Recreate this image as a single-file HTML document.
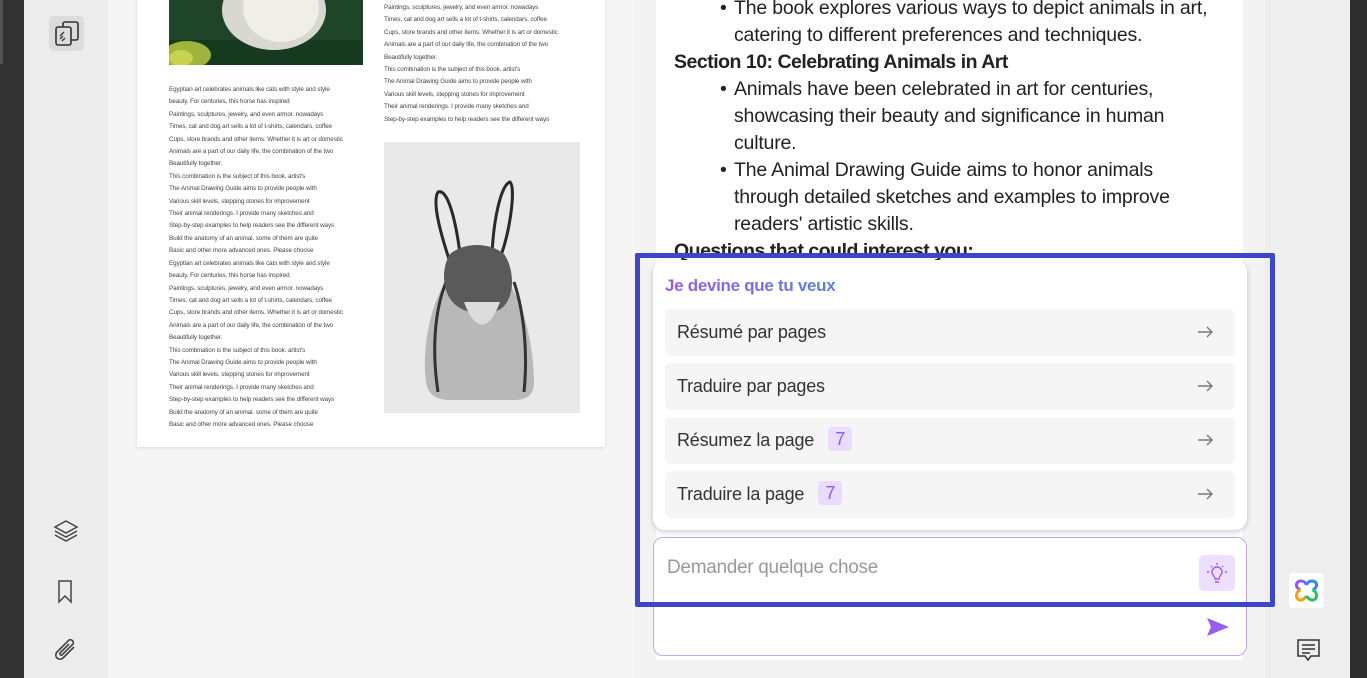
<!DOCTYPE html>
<html><head><meta charset="utf-8"><style>
*{margin:0;padding:0;box-sizing:border-box}
body{width:1367px;height:678px;overflow:hidden;position:relative;background:#f5f5f5;font-family:"Liberation Sans",sans-serif}
.abs{position:absolute}
.pt{font-size:6.3px;color:#444;line-height:12.4px;white-space:nowrap;letter-spacing:-0.1px}
.ans{font-size:19.5px;color:#222;line-height:27px;letter-spacing:-0.2px;white-space:nowrap}
.item{position:absolute;left:12px;width:570px;height:47px;background:#f5f5f5;border-radius:6px;font-size:18px;color:#333;line-height:47px;padding-left:12px;letter-spacing:-0.2px}
.item svg{position:absolute;right:22px;top:17px}
.badge{display:inline-block;background:#e9dcff;color:#8b5cf0;border-radius:4px;width:24px;height:24px;line-height:24px;text-align:center;margin-left:14px;font-size:18px;vertical-align:1px}
</style></head><body>
<div class="abs" style="left:0;top:0;width:24px;height:678px;background:#333"></div>
<div class="abs" style="left:0;top:0;width:3px;height:64px;background:#555"></div>
<div class="abs" style="left:24px;top:0;width:84px;height:678px;background:#ececec"></div>
<div class="abs" style="left:49px;top:16px;width:35px;height:35px;background:#dcdcdc;border-radius:5px"></div>
<svg class="abs" style="left:49px;top:16px" width="35" height="35" viewBox="0 0 35 35" fill="none" stroke="#333" stroke-width="1.6"><rect x="14" y="6" width="15" height="18" rx="2"/><rect x="7" y="11" width="15" height="18" rx="2" fill="#dcdcdc"/><path d="M11 23l3-3M11 20l4-4M13 25l3-3" stroke-width="1.3"/></svg>
<svg class="abs" style="left:52px;top:518px" width="28" height="26" viewBox="0 0 28 26" fill="none" stroke="#444" stroke-width="1.5"><path d="M14 3l11 6-11 6-11-6z"/><path d="M3 13l11 6 11-6"/><path d="M3 17l11 6 11-6"/></svg>
<svg class="abs" style="left:56px;top:579px" width="20" height="26" viewBox="0 0 20 26" fill="none" stroke="#444" stroke-width="1.5"><path d="M3 2h12v21l-6-6-6 6z"/></svg>
<svg class="abs" style="left:52px;top:637px" width="28" height="30" viewBox="0 0 28 30" fill="none" stroke="#444" stroke-width="1.6"><path d="M22 10l-11 11a4 4 0 0 1-6-6l12-12a3 3 0 0 1 4 4l-11 11a1.5 1.5 0 0 1-2-2l9-9"/></svg>

<div class="abs" style="left:137px;top:0;width:468px;height:447px;background:#fff;box-shadow:0 1px 3px rgba(0,0,0,.12)"></div>
<svg class="abs" style="left:169px;top:0" width="194" height="65" viewBox="0 0 194 65"><rect width="194" height="65" fill="#1f4529"/><rect y="40" width="194" height="25" fill="#163a20"/><ellipse cx="105" cy="10" rx="52" ry="40" fill="#d9d8d0"/><ellipse cx="112" cy="8" rx="38" ry="34" fill="#efeee9"/><ellipse cx="18" cy="55" rx="24" ry="14" fill="#9fb43c"/><ellipse cx="12" cy="58" rx="12" ry="8" fill="#c8d24e"/></svg>
<div class="abs pt" style="left:169px;top:84px">Egyptian art celebrates animals like cats with style and style<br>beauty. For centuries, this horse has inspired<br>Paintings, sculptures, jewelry, and even armor. nowadays<br>Times, cat and dog art sells a lot of t-shirts, calendars, coffee<br>Cups, store brands and other items. Whether it is art or domestic<br>Animals are a part of our daily life, the combination of the two<br>Beautifully together.<br>This combination is the subject of this book. artist's<br>The Animal Drawing Guide aims to provide people with<br>Various skill levels, stepping stones for improvement<br>Their animal renderings. I provide many sketches and<br>Step-by-step examples to help readers see the different ways<br>Build the anatomy of an animal. some of them are quite<br>Basic and other more advanced ones. Please choose<br>Egyptian art celebrates animals like cats with style and style<br>beauty. For centuries, this horse has inspired<br>Paintings, sculptures, jewelry, and even armor. nowadays<br>Times, cat and dog art sells a lot of t-shirts, calendars, coffee<br>Cups, store brands and other items. Whether it is art or domestic<br>Animals are a part of our daily life, the combination of the two<br>Beautifully together.<br>This combination is the subject of this book. artist's<br>The Animal Drawing Guide aims to provide people with<br>Various skill levels, stepping stones for improvement<br>Their animal renderings. I provide many sketches and<br>Step-by-step examples to help readers see the different ways<br>Build the anatomy of an animal. some of them are quite<br>Basic and other more advanced ones. Please choose</div>
<div class="abs pt" style="left:384px;top:2px">Paintings, sculptures, jewelry, and even armor. nowadays<br>Times, cat and dog art sells a lot of t-shirts, calendars, coffee<br>Cups, store brands and other items. Whether it is art or domestic<br>Animals are a part of our daily life, the combination of the two<br>Beautifully together.<br>This combination is the subject of this book. artist's<br>The Animal Drawing Guide aims to provide people with<br>Various skill levels, stepping stones for improvement<br>Their animal renderings. I provide many sketches and<br>Step-by-step examples to help readers see the different ways</div>
<svg class="abs" style="left:384px;top:142px" width="196" height="271" viewBox="0 0 196 271"><rect width="196" height="271" fill="#e8e9e8"/>
<g fill="none" stroke="#2a2a2a" stroke-width="3"><path d="M66 120c-10-30-18-60-12-70 10-4 18 30 22 62"/><path d="M108 112c2-40 10-70 18-72 6 6 0 50-10 76"/></g>
<path d="M62 140c-18 25-24 75-20 100 2 14 12 18 24 18h64c14 0 20-6 20-18 0-30-8-75-26-100z" fill="#b8b8b8"/>
<path d="M62 140c-12 30-14 70-8 110M130 140c10 30 14 70 10 110" stroke="#333" stroke-width="3" fill="none"/>
<path d="M66 112c-10 16-8 44 10 54 14 8 30 8 42 0 14-12 12-40 2-54-14-12-40-12-54 0z" fill="#5a5a5a"/>
<path d="M80 160c10 28 24 32 36 0z" fill="#dcdcdc"/></svg>

<div class="abs" style="left:635px;top:0;width:630px;height:678px;background:#f3f3f3"></div>
<div class="abs" style="left:656px;top:0;width:587px;height:660px;background:#fff"></div>
<div class="abs" style="left:1265px;top:0;width:85px;height:678px;background:#eeeeee"></div>
<div class="abs" style="left:1350px;top:0;width:17px;height:678px;background:#2e2e2e"></div>

<div class="abs ans" style="left:674px;top:-5px">
<div style="padding-left:60px;position:relative"><span style="position:absolute;left:46px">•</span>The book explores various ways to depict animals in art,<br>catering to different preferences and techniques.</div>
<div style="font-weight:bold;letter-spacing:-0.5px">Section 10: Celebrating Animals in Art</div>
<div style="padding-left:60px;position:relative"><span style="position:absolute;left:46px">•</span>Animals have been celebrated in art for centuries,<br>showcasing their beauty and significance in human<br>culture.</div>
<div style="padding-left:60px;position:relative"><span style="position:absolute;left:46px">•</span>The Animal Drawing Guide aims to honor animals<br>through detailed sketches and examples to improve<br>readers' artistic skills.</div>
<div style="font-weight:bold;letter-spacing:-0.5px">Questions that could interest you:</div>
</div>

<div class="abs" style="left:653px;top:260px;width:594px;height:270px;background:#fff;border-radius:12px;box-shadow:0 2px 6px rgba(0,0,0,.2)">
<div class="abs" style="left:12px;top:16px;font-size:17px;font-weight:bold;background:linear-gradient(90deg,#9a5ce6,#5b7fe0);-webkit-background-clip:text;color:transparent;letter-spacing:-0.3px">Je devine que tu veux</div>
<div class="item" style="top:49px">Résumé par pages<svg width="16" height="12" viewBox="0 0 16 12" fill="none" stroke="#777" stroke-width="1.4"><path d="M1 6h14M10 1l5 5-5 5"/></svg></div>
<div class="item" style="top:103px">Traduire par pages<svg width="16" height="12" viewBox="0 0 16 12" fill="none" stroke="#777" stroke-width="1.4"><path d="M1 6h14M10 1l5 5-5 5"/></svg></div>
<div class="item" style="top:157px">Résumez la page<span class="badge">7</span><svg width="16" height="12" viewBox="0 0 16 12" fill="none" stroke="#777" stroke-width="1.4"><path d="M1 6h14M10 1l5 5-5 5"/></svg></div>
<div class="item" style="top:211px">Traduire la page<span class="badge">7</span><svg width="16" height="12" viewBox="0 0 16 12" fill="none" stroke="#777" stroke-width="1.4"><path d="M1 6h14M10 1l5 5-5 5"/></svg></div>
</div>

<div class="abs" style="left:653px;top:537px;width:594px;height:119px;border:1px solid #c8a6ef;border-radius:10px;background:#fff"></div>
<div class="abs" style="left:667px;top:557px;font-size:19px;color:#999;letter-spacing:-0.3px">Demander quelque chose</div>
<div class="abs" style="left:1199px;top:555px;width:36px;height:36px;background:#ecdfff;border-radius:5px"></div>
<svg class="abs" style="left:1199px;top:555px" width="36" height="36" viewBox="0 0 36 36" fill="none" stroke="#9b5cf0" stroke-width="1.4"><path d="M13 17a5 5 0 1 1 10 0c0 3-3 4-3 7h-4c0-3-3-4-3-7z"/><path d="M16 27h4M18 8v2M10 17h-2M28 17h-2M12 11l1 1M24 11l-1 1"/></svg>
<svg class="abs" style="left:1205px;top:616px" width="26" height="22" viewBox="0 0 26 22"><path d="M2 2l22 9-22 9 4-9z" fill="#9b5cf0"/></svg>

<div class="abs" style="left:635px;top:253px;width:640px;height:354px;border:5px solid #3d45c8;border-radius:2px"></div>

<div class="abs" style="left:1289px;top:573px;width:35px;height:35px;background:#fff;border-radius:4px"></div>
<svg class="abs" style="left:1292px;top:576px" width="29" height="29" viewBox="0 0 29 29" fill="none" stroke-width="3"><path d="M14.5 9c-2-6-11-5-10 1 1 3 4 4 4 4" stroke="#8b5cf6"/><path d="M14.5 9c2-6 11-5 10 1-1 3-4 4-4 4" stroke="#3b82f6"/><path d="M8.5 14c-6 2-5 11 1 10 3-1 5-4 5-4" stroke="#f59e0b"/><path d="M20.5 14c6 2 5 11-1 10-3-1-5-4-5-4" stroke="#22c55e"/></svg>
<svg class="abs" style="left:1296px;top:638px" width="25" height="26" viewBox="0 0 25 26" fill="none" stroke="#333" stroke-width="1.5"><path d="M2 2h21v16h-8l-3 4-3-4H2z"/><path d="M6 7h13M6 11h13M6 15h8"/></svg>
</body></html>
